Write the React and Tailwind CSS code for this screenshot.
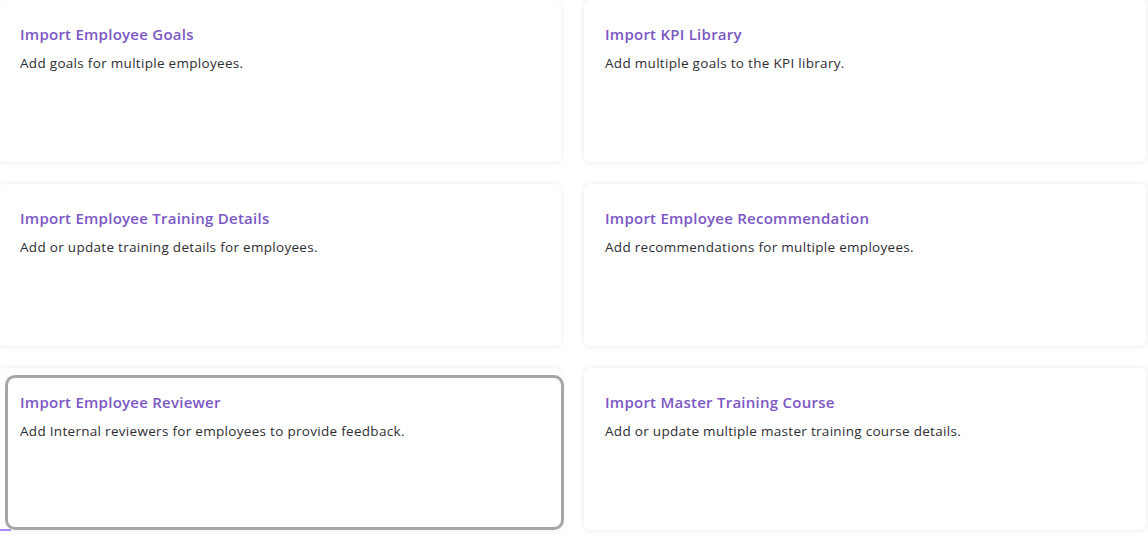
const cards = [
  { title: 'Import Employee Goals', desc: 'Add goals for multiple employees.' },
  { title: 'Import KPI Library', desc: 'Add multiple goals to the KPI library.' },
  { title: 'Import Employee Training Details', desc: 'Add or update training details for employees.' },
  { title: 'Import Employee Recommendation', desc: 'Add recommendations for multiple employees.' },
  { title: 'Import Employee Reviewer', desc: 'Add Internal reviewers for employees to provide feedback.', focused: true },
  { title: 'Import Master Training Course', desc: 'Add or update multiple master training course details.' },
];

export default function App() {
  return (
    <div className="w-[1148px] h-[551px] bg-white overflow-hidden" style={{ fontFamily: '"Open Sans", "Noto Sans", sans-serif' }}>
      <div className="grid grid-cols-[562px_562px] gap-x-[23px] gap-y-[22px] -ml-[1px]">
        {cards.map(({ title, desc, focused }) => (
          <div
            key={title}
            className="relative h-[162px] bg-white rounded-md shadow-[0_0_6px_rgba(0,0,0,0.09)] px-[21px] pt-[24px]"
          >
            <h3 className="text-[15px] leading-[21px] font-semibold text-[#7b58c4] tracking-[0.25px]">
              {title}
            </h3>
            <p className="mt-[8px] text-[13.5px] leading-[20px] text-[#2e2e33] tracking-[0.3px]">
              {desc}
            </p>
            {focused && (
              <>
                <div className="absolute left-[6px] top-[7px] right-[-3px] bottom-[0px] rounded-[10px] border-[3px] border-[#a6a6a6]" />
                <div className="absolute left-0 bottom-[-1px] w-[12px] h-[2px] bg-[#a78bfa]" />
              </>
            )}
          </div>
        ))}
      </div>
    </div>
  );
}
